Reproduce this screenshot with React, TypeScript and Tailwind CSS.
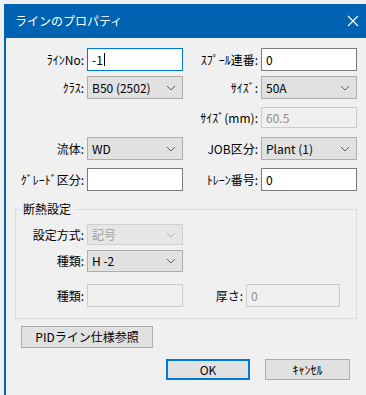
const font = { fontFamily: '"Meiryo UI", "Noto Sans CJK JP", "Noto Sans", sans-serif' };

const Chevron = ({ disabled }: { disabled?: boolean }) => (
  <svg width="10" height="6" viewBox="0 0 10 6" className="mr-[6px]">
    <path d="M1 1 L5 5 L9 1" fill="none" stroke={disabled ? "#b5b5b5" : "#606060"} strokeWidth="1" />
  </svg>
);

const Label = ({ text, w }: { text: string; w: string }) => (
  <div className={`${w} shrink-0 text-right pr-[3px] text-[12px] text-black leading-none`}>{text}</div>
);

const TextBox = ({
  value,
  w = "w-[96px]",
  h = "h-[23px]",
  disabled,
  focus,
}: {
  value?: string;
  w?: string;
  h?: string;
  disabled?: boolean;
  focus?: boolean;
}) => (
  <div
    className={`${w} ${h} shrink-0 flex items-center pl-[4px] text-[12px] border ${
      disabled
        ? "bg-[#f0f0f0] border-[#cccccc] text-[#8d8d8d]"
        : focus
        ? "bg-white border-[#0078d7] text-black"
        : "bg-white border-[#7a7a7a] text-black"
    }`}
  >
    {value}
    {focus && <span className="w-px h-[13px] bg-black ml-[1px]" />}
  </div>
);

const Combo = ({ value, disabled, h = "h-[23px]" }: { value: string; disabled?: boolean; h?: string }) => (
  <div
    className={`w-[96px] ${h} shrink-0 flex items-center justify-between pl-[4px] text-[12px] border ${
      disabled ? "bg-[#e6e6e6] border-[#d0d0d0] text-[#a0a0a0]" : "bg-[#e1e1e1] border-[#adadad] text-black"
    }`}
  >
    <span>{value}</span>
    <Chevron disabled={disabled} />
  </div>
);

const Button = ({ text, w, primary }: { text: string; w: string; primary?: boolean }) => (
  <div
    className={`${w} h-[21px] flex items-center justify-center text-[12px] text-black bg-[#e1e1e1] ${
      primary ? "border-2 border-[#0078d7]" : "border border-[#adadad]"
    }`}
  >
    {text}
  </div>
);

export default function App() {
  return (
    <div className="w-[366px] h-[395px] overflow-hidden bg-[#f0f0f0] pt-[4px] pl-[4px]" style={font}>
      <div className="h-[400px] border-l-2 border-[#0063b1] flex flex-col">
        <div className="h-[34px] shrink-0 bg-[#0063b1] flex items-center justify-between pl-[9px] pr-[3px]">
          <span className="text-white text-[12px]">ラインのプロパティ</span>
          <svg width="12" height="12" viewBox="0 0 12 12" className="mr-[4px]">
            <path d="M1 1 L11 11 M11 1 L1 11" stroke="white" strokeWidth="1.2" />
          </svg>
        </div>

        <div className="flex flex-col pt-[10px]">
          <div className="flex items-center">
            <Label text="ﾗｲﾝNo:" w="w-[81px]" />
            <TextBox value="-1" focus />
            <Label text="ｽﾌﾟｰﾙ連番:" w="w-[78px]" />
            <TextBox value="0" />
          </div>
          <div className="flex items-center mt-[5px]">
            <Label text="ｸﾗｽ:" w="w-[81px]" />
            <Combo value="B50 (2502)" />
            <Label text="ｻｲｽﾞ:" w="w-[78px]" />
            <Combo value="50A" />
          </div>
          <div className="flex items-center mt-[8px]">
            <div className="w-[177px] shrink-0" />
            <Label text="ｻｲｽﾞ(mm):" w="w-[78px]" />
            <TextBox value="60.5" h="h-[21px]" disabled />
          </div>
          <div className="flex items-center mt-[9px]">
            <Label text="流体:" w="w-[81px]" />
            <Combo value="WD" />
            <Label text="JOB区分:" w="w-[78px]" />
            <Combo value="Plant (1)" />
          </div>
          <div className="flex items-center mt-[8px]">
            <Label text="ｸﾞﾚｰﾄﾞ区分:" w="w-[81px]" />
            <TextBox />
            <Label text="ﾄﾚｰﾝ番号:" w="w-[78px]" />
            <TextBox value="0" />
          </div>

          <fieldset className="ml-[9px] w-[342px] mt-[12px] h-[116px] border border-[#dcdcdc] flex flex-col">
            <legend className="ml-[4px] px-[3px] text-[12px] text-black leading-none">断熱設定</legend>
            <div className="flex items-center mt-[9px]">
              <Label text="設定方式:" w="w-[71px]" />
              <Combo value="記号" disabled h="h-[21px]" />
            </div>
            <div className="flex items-center mt-[5px]">
              <Label text="種類:" w="w-[71px]" />
              <Combo value="H -2" h="h-[22px]" />
            </div>
            <div className="flex items-center mt-[12px]">
              <Label text="種類:" w="w-[71px]" />
              <TextBox disabled />
              <Label text="厚さ:" w="w-[63px]" />
              <TextBox value="0" w="w-[94px]" disabled />
            </div>
          </fieldset>

          <div className="ml-[15px] mt-[7px]">
            <Button text="PIDライン仕様参照" w="w-[132px] h-[22px]" />
          </div>
          <div className="flex items-center mt-[11px] ml-[160px] gap-[15px]">
            <Button text="OK" w="w-[84px]" primary />
            <Button text="ｷｬﾝｾﾙ" w="w-[85px]" />
          </div>
        </div>
      </div>
    </div>
  );
}
